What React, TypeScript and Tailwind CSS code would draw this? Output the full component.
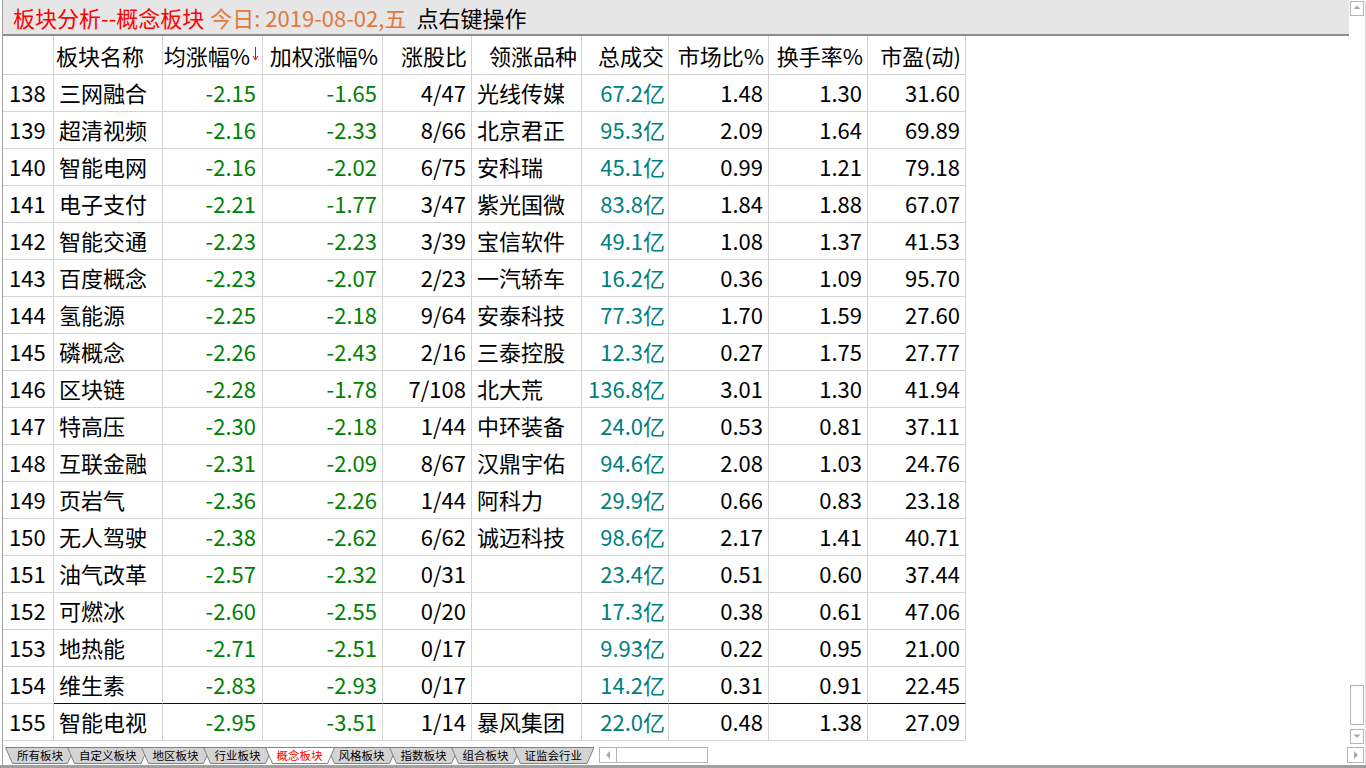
const rows: [string, string, string, string, string, string, string, string, string, string][] = [
	["138", "三网融合", "-2.15", "-1.65", "4/47", "光线传媒", "67.2亿", "1.48", "1.30", "31.60"],
	["139", "超清视频", "-2.16", "-2.33", "8/66", "北京君正", "95.3亿", "2.09", "1.64", "69.89"],
	["140", "智能电网", "-2.16", "-2.02", "6/75", "安科瑞", "45.1亿", "0.99", "1.21", "79.18"],
	["141", "电子支付", "-2.21", "-1.77", "3/47", "紫光国微", "83.8亿", "1.84", "1.88", "67.07"],
	["142", "智能交通", "-2.23", "-2.23", "3/39", "宝信软件", "49.1亿", "1.08", "1.37", "41.53"],
	["143", "百度概念", "-2.23", "-2.07", "2/23", "一汽轿车", "16.2亿", "0.36", "1.09", "95.70"],
	["144", "氢能源", "-2.25", "-2.18", "9/64", "安泰科技", "77.3亿", "1.70", "1.59", "27.60"],
	["145", "磷概念", "-2.26", "-2.43", "2/16", "三泰控股", "12.3亿", "0.27", "1.75", "27.77"],
	["146", "区块链", "-2.28", "-1.78", "7/108", "北大荒", "136.8亿", "3.01", "1.30", "41.94"],
	["147", "特高压", "-2.30", "-2.18", "1/44", "中环装备", "24.0亿", "0.53", "0.81", "37.11"],
	["148", "互联金融", "-2.31", "-2.09", "8/67", "汉鼎宇佑", "94.6亿", "2.08", "1.03", "24.76"],
	["149", "页岩气", "-2.36", "-2.26", "1/44", "阿科力", "29.9亿", "0.66", "0.83", "23.18"],
	["150", "无人驾驶", "-2.38", "-2.62", "6/62", "诚迈科技", "98.6亿", "2.17", "1.41", "40.71"],
	["151", "油气改革", "-2.57", "-2.32", "0/31", "", "23.4亿", "0.51", "0.60", "37.44"],
	["152", "可燃冰", "-2.60", "-2.55", "0/20", "", "17.3亿", "0.38", "0.61", "47.06"],
	["153", "地热能", "-2.71", "-2.51", "0/17", "", "9.93亿", "0.22", "0.95", "21.00"],
	["154", "维生素", "-2.83", "-2.93", "0/17", "", "14.2亿", "0.31", "0.91", "22.45"],
	["155", "智能电视", "-2.95", "-3.51", "1/14", "暴风集团", "22.0亿", "0.48", "1.38", "27.09"],
];

const headers = ["", "板块名称", "均涨幅%", "加权涨幅%", "涨股比", "领涨品种", "总成交", "市场比%", "换手率%", "市盈(动)"];

// per column: alignment + text colour of the data cells
const cellStyle = [
	"justify-start pl-[6px] text-black",
	"justify-start pl-[5px] text-black",
	"justify-end pr-[6px] text-[#008000]",
	"justify-end pr-[5px] text-[#008000]",
	"justify-end pr-[5px] text-black",
	"justify-start pl-[5px] text-black",
	"justify-end pr-[3px] text-[#008080]",
	"justify-end pr-[5px] text-black",
	"justify-end pr-[5px] text-black",
	"justify-end pr-[5px] text-black",
];

const tabs = ["所有板块", "自定义板块", "地区板块", "行业板块", "概念板块", "风格板块", "指数板块", "组合板块", "证监会行业"];
const activeTab = "概念板块";

function Arrow({ dir }: { dir: "up" | "down" | "left" | "right" }) {
	const pts = {
		up: "3,7 11,7 7,3",
		down: "3,4 11,4 7,8",
		left: "9,3 9,11 5,7",
		right: "5,3 5,11 9,7",
	}[dir];
	return (
		<svg width="14" height="14" viewBox="0 0 14 14" className="block">
			<polygon points={pts} fill="#a8a8a8" />
		</svg>
	);
}

function Tab({ label }: { label: string }) {
	const w = label.length * 11.5 + 24;
	const h = 17;
	const active = label === activeTab;
	return (
		<div
			className={`relative -ml-[8px] first:ml-0 flex items-center justify-center h-[17px] ${active ? "z-10 text-[#ff0000]" : "text-black"}`}
			style={{ width: w }}
		>
			<svg width={w} height={h} className="absolute left-0 top-0">
				<polygon
					points={`0.5,0.5 ${w - 0.5},0.5 ${w - 7.5},${h - 0.5} 7.5,${h - 0.5}`}
					fill={active ? "#ffffff" : "#d4d4d4"}
					stroke="#808080"
				/>
			</svg>
			<span className="relative text-[11.5px] leading-none">{label}</span>
		</div>
	);
}

export default function App() {
	return (
		<div className="w-[1366px] h-[768px] flex flex-col bg-white overflow-hidden font-['Noto_Sans_CJK_SC',sans-serif]">
			<div className="flex h-[765px]">
				{/* Left: title, table, sheet tabs */}
				<div className="flex-1 flex flex-col ml-[2px] border-l border-[#a0a0a0]">
					{/* Title bar */}
					<div className="h-[36px] shrink-0 bg-[#e6e6e6] border-b-2 border-[#8c8c8c] flex items-center pl-[10px] text-[22px] leading-none">
						<span className="text-[#ff0000]">板块分析--概念板块</span>
						<span className="text-[#e07a3c] ml-[6px]">今日: 2019-08-02,五</span>
						<span className="text-black ml-[10px]">点右键操作</span>
					</div>

					{/* Table */}
					<div className="grid grid-cols-[51px_109px_100px_120px_89px_110px_87px_100px_99px_98px] w-[963px] text-[22px] leading-none whitespace-nowrap">
						{headers.map((h, i) => (
							<div
								key={"h" + i}
								className={`h-[39px] border-r border-b border-[#d4d4d4] flex items-center text-black ${i === 1 ? "justify-start pl-[2px]" : i === 2 ? "justify-end pr-[3px]" : "justify-end pr-[4px]"}`}
							>
								<span>{h}</span>
								{i === 2 && (
									<svg width="7" height="14" viewBox="0 0 7 14" className="shrink-0 ml-[2px] -mt-[2px]">
										<line x1="3.5" y1="0" x2="3.5" y2="12" stroke="#ff0000" strokeWidth="1" />
										<polyline points="1,9 3.5,13 6,9" fill="none" stroke="#ff0000" strokeWidth="1" />
									</svg>
								)}
							</div>
						))}
						{rows.map((r, ri) =>
							r.map((v, ci) => (
								<div
									key={ri + "-" + ci}
									className={`h-[37px] pb-[2px] border-r border-b flex items-center ${cellStyle[ci]} ${ri === 16 && ci > 0 ? "border-b-[#000080] border-r-[#d4d4d4]" : "border-[#d4d4d4]"}`}
								>
									{v}
								</div>
							))
						)}
					</div>

					{/* Sheet tabs + horizontal scroll */}
					<div className="flex-1 flex items-start pt-[6px] pl-[2px]">
						<div className="flex">
							{tabs.map((t) => (
								<Tab key={t} label={t} />
							))}
						</div>
						<div className="ml-[5px] flex h-[16px] border border-[#b4b4b4]">
							<div className="w-[17px] border-r border-[#b4b4b4] flex items-center justify-center">
								<Arrow dir="left" />
							</div>
							<div className="w-[90px]" />
						</div>
					</div>
				</div>

				{/* Vertical scrollbar */}
				<div className="w-[17px] shrink-0 flex flex-col items-end border-r border-[#dcdcdc] pr-[1px]">
					<div className="mt-[1px] w-[14px] h-[15px] border border-[#b4b4b4] flex items-center justify-center">
						<Arrow dir="up" />
					</div>
					<div className="flex-1" />
					<div className="w-[14px] h-[40px] border border-[#b4b4b4]" />
					<div className="mt-[4px] w-[14px] h-[15px] border border-[#b4b4b4] flex items-center justify-center">
						<Arrow dir="down" />
					</div>
					<div className="mt-[3px] mb-[2px] w-[17px] h-[16px] border border-[#b4b4b4] flex items-center justify-center">
						<Arrow dir="right" />
					</div>
				</div>
			</div>
			<div className="h-[3px] bg-[#a0a0a0]" />
		</div>
	);
}
